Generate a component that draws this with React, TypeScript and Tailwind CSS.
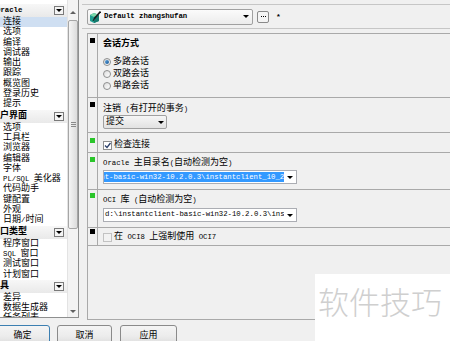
import React from "react";

// split CJK and ASCII so latin prints as half-width mono like SimSun
function T({ s }: { s: string }) {
  const parts = s.split(/([\x00-\x7f]+)/).filter(Boolean);
  return (
    <>
      {parts.map((p, i) =>
        /^[\x00-\x7f]+$/.test(p) ? (
          <span key={i} className="text-[7.3px]">
            {p}
          </span>
        ) : (
          <span key={i}>{p}</span>
        )
      )}
    </>
  );
}

const tree = [
  {
    title: "Oracle",
    shift: "ml-[-4px]",
    items: ["连接", "选项", "编译", "调试器", "输出", "跟踪", "概览图", "登录历史", "提示"],
  },
  {
    title: "用户界面",
    shift: "ml-[-9px]",
    items: ["选项", "工具栏", "浏览器", "编辑器", "字体", "PL/SQL 美化器", "代码助手", "键配置", "外观", "日期/时间"],
  },
  {
    title: "窗口类型",
    shift: "ml-[-9px]",
    items: ["程序窗口", "SQL 窗口", "测试窗口", "计划窗口"],
  },
  {
    title: "工具",
    shift: "ml-[-9px]",
    items: ["差异", "数据生成器", "任务列表"],
  },
];

function DownTri() {
  return <div className="w-0 h-0 border-x-[3px] border-x-transparent border-t-[3px] border-t-black" />;
}

function LeftPanel() {
  return (
    <div className="flex w-[79px] h-[318px] shrink-0 border-r border-b border-[#8e8f8f] bg-white">
      <div className="w-[67px] overflow-hidden pt-[4px]">
        {tree.map((g) => (
          <div key={g.title}>
            <div className="flex h-[13px] items-center justify-between pr-[3px] bg-gradient-to-b from-[#f7f7f7] to-[#e9e9e9]">
              <span className={`font-bold whitespace-nowrap ${g.shift}`}>
                <T s={g.title} />
              </span>
              <div className="flex w-[10px] h-[9px] items-center justify-center border border-[#7a7a7a] bg-[#f4f4f4]">
                <DownTri />
              </div>
            </div>
            {g.items.map((it, i) => (
              <div
                key={it}
                className={`h-[10.3px] leading-[10.3px] pl-[3px] whitespace-nowrap ${
                  g.title === "Oracle" && i === 0 ? "bg-[#cfdff2]" : ""
                }`}
              >
                <T s={it} />
              </div>
            ))}
          </div>
        ))}
      </div>
      <div className="flex w-[11px] flex-col border-l border-[#e3e3e3] bg-[#f3f3f3]">
        <div className="flex h-[20px] justify-center pt-[11px]">
          <div className="w-0 h-0 border-x-[3px] border-x-transparent border-b-[3px] border-b-[#606060]" />
        </div>
        <div className="flex h-[209px] flex-col items-center justify-center rounded-[2px] border border-[#a6a6a6] bg-gradient-to-r from-[#f5f5f5] to-[#dcdcdc]">
          <div className="w-[5px] border-t border-[#8a8a8a]" />
          <div className="mt-[1px] w-[5px] border-t border-[#8a8a8a]" />
          <div className="mt-[1px] w-[5px] border-t border-[#8a8a8a]" />
        </div>
        <div className="mt-auto flex justify-center pb-[4px]">
          <div className="w-0 h-0 border-x-[3px] border-x-transparent border-t-[3px] border-t-[#606060]" />
        </div>
      </div>
    </div>
  );
}

function SessionIcon() {
  return (
    <svg width="12" height="12" viewBox="0 0 12 12">
      <path d="M1 4 L5 2 L10 4 L10 10 L5 12 L1 10 Z" fill="#1f9d8f" />
      <path d="M1 4 L5 2 L10 4 L5 6 Z" fill="#7ad6a8" />
      <path d="M5 6 L10 4 L10 10 L5 12 Z" fill="#157a6e" />
      <path d="M11.5 0.5 L5 8" stroke="#1b1b1b" strokeWidth="1.6" />
      <path d="M5 8 L4 10" stroke="#1b1b1b" strokeWidth="1" />
    </svg>
  );
}

function Marker({ green, top }: { green?: boolean; top: string }) {
  return (
    <div className={`w-[10px] shrink-0 border-r border-[#a9a9a9] pl-[2px] ${top}`}>
      <div className={`w-[5px] h-[5px] ${green ? "bg-[#2ac52a]" : "bg-black"}`} />
    </div>
  );
}

function Radio({ on }: { on?: boolean }) {
  return (
    <div className="flex w-[8px] h-[8px] items-center justify-center rounded-full border border-[#8e8f8f] bg-gradient-to-br from-[#dcdcdc] to-white">
      {on && <div className="w-[4px] h-[4px] rounded-full bg-gradient-to-br from-[#5aa3e0] to-[#1c5a96]" />}
    </div>
  );
}

function Combo({ w, children }: { w: string; children: React.ReactNode }) {
  return (
    <div className={`flex h-[14px] ${w} border border-[#abadb3] bg-white`}>
      <div className="flex flex-1 items-center overflow-hidden whitespace-nowrap">{children}</div>
      <div className="flex w-[12px] items-center justify-center">
        <DownTri />
      </div>
    </div>
  );
}

const path = "d:\\instantclient-basic-win32-10.2.0.3\\instantclient_10_2";

function MainPanel() {
  return (
    <div className="ml-[5px] mt-[4px] flex flex-1 flex-col border-t border-l border-b border-[#a9a9a9]">
      <div className="flex h-[64px] border-b border-[#a9a9a9]">
        <Marker top="pt-[4px]" />
        <div className="pl-[5px] pt-[5px]">
          <div className="h-[10px] leading-[10px] font-semibold">会话方式</div>
          <div className="mt-[7px] flex h-[12px] items-center gap-[2px]">
            <Radio on />
            <span>多路会话</span>
          </div>
          <div className="flex h-[12px] items-center gap-[2px]">
            <Radio />
            <span>双路会话</span>
          </div>
          <div className="flex h-[12px] items-center gap-[2px]">
            <Radio />
            <span>单路会话</span>
          </div>
        </div>
      </div>

      <div className="flex h-[35px] border-b border-[#a9a9a9]">
        <Marker top="pt-[4px]" />
        <div className="pl-[5px] pt-[6px]">
          <div className="h-[10px] leading-[10px] whitespace-nowrap">
            <T s="注销 (有打开的事务)" />
          </div>
          <div className="mt-[1px] flex h-[14px] w-[64px] rounded-[2px] border border-[#a0a0a0] bg-gradient-to-b from-[#f6f6f6] to-[#e2e2e2]">
            <div className="flex flex-1 items-center pl-[2px]">提交</div>
            <div className="flex w-[10px] items-center justify-center">
              <DownTri />
            </div>
          </div>
        </div>
      </div>

      <div className="flex h-[20px] border-b border-[#a9a9a9]">
        <Marker green top="pt-[5px]" />
        <div className="pl-[5px] pt-[7px]">
          <div className="flex h-[10px] items-center gap-[2px]">
            <div className="flex w-[9px] h-[9px] items-center justify-center border border-[#8e8f8f] bg-white">
              <svg width="7" height="7" viewBox="0 0 7 7">
                <path d="M1 3.5 L3 5.5 L6.5 1" stroke="#2a3f6a" strokeWidth="1.3" fill="none" />
              </svg>
            </div>
            <span>检查连接</span>
          </div>
        </div>
      </div>

      <div className="flex h-[37px] border-b border-[#a9a9a9]">
        <Marker green top="pt-[4px]" />
        <div className="pl-[5px] pt-[5px]">
          <div className="h-[10px] leading-[10px] whitespace-nowrap">
            <T s="Oracle 主目录名(自动检测为空)" />
          </div>
          <div className="mt-[2px]">
            <Combo w="w-[194px]">
              <span className="ml-[-65px] bg-[#3399ff] text-[7.3px] leading-[10px] text-white">{path}</span>
            </Combo>
          </div>
        </div>
      </div>

      <div className="flex h-[38px] border-b border-[#a9a9a9]">
        <Marker green top="pt-[3px]" />
        <div className="pl-[5px] pt-[5px]">
          <div className="h-[10px] leading-[10px] whitespace-nowrap">
            <T s="OCI 库 (自动检测为空)" />
          </div>
          <div className="mt-[3px]">
            <Combo w="w-[194px]">
              <span className="pl-[1px] text-[7.3px]">{path}</span>
            </Combo>
          </div>
        </div>
      </div>

      <div className="flex h-[18px] border-b border-[#a9a9a9]">
        <Marker top="pt-[1px]" />
        <div className="pl-[5px] pt-[4px]">
          <div className="flex h-[10px] items-center gap-[2px]">
            <div className="w-[9px] h-[9px] border border-[#c2c2c2] bg-[#f2f2f2]" />
            <span className="whitespace-nowrap">
              <T s="在 OCI8 上强制使用 OCI7" />
            </span>
          </div>
        </div>
      </div>
    </div>
  );
}

function Btn({ label, def, cls }: { label: string; def?: boolean; cls: string }) {
  return (
    <div
      className={`flex h-[22px] items-center justify-center rounded-[3px] border bg-gradient-to-b from-[#f4f4f4] via-[#ececec] to-[#d9d9d9] ${
        def ? "border-[#3c7fb1]" : "border-[#8a8a8a]"
      } ${cls}`}
    >
      {label}
    </div>
  );
}

export default function App() {
  return (
    <div className="relative w-[450px] h-[341px] overflow-hidden bg-[#f0f0f0] text-[9px] leading-none text-black font-['Liberation_Mono','Noto_Sans_CJK_SC',monospace]">
      <div className="flex h-[320px]">
        <LeftPanel />
        <div className="flex flex-1 flex-col pl-[3px] pt-[4px]">
          <div className="flex h-[25px] items-center border-t border-b border-[#c6c6c6] pl-[5px]">
            <div className="flex h-[16px] w-[166px] items-center rounded-[2px] border border-[#a0a0a0] bg-gradient-to-b from-[#fbfbfb] to-[#ececec]">
              <div className="pl-[1px] pr-[3px]">
                <SessionIcon />
              </div>
              <span className="flex-1 text-[7.3px] font-bold">Default zhangshufan</span>
              <div className="flex w-[12px] justify-center">
                <DownTri />
              </div>
            </div>
            <div className="ml-[4px] flex h-[12px] w-[12px] items-center justify-center gap-[1px] rounded-[2px] border border-[#8a8a8a] bg-[#f4f4f4]">
              <div className="w-[1px] h-[1px] bg-black" />
              <div className="w-[1px] h-[1px] bg-black" />
              <div className="w-[1px] h-[1px] bg-black" />
            </div>
            <span className="ml-[7px] text-[8px] font-bold">*</span>
          </div>
          <MainPanel />
        </div>
      </div>
      <div className="mt-[5px] flex">
        <Btn label="确定" def cls="ml-[-5px] w-[55px]" />
        <Btn label="取消" cls="ml-[7px] w-[55px]" />
        <Btn label="应用" cls="ml-[8px] w-[57px]" />
      </div>
      <div className="absolute left-[315px] top-[274px] w-[135px] h-[67px] bg-white pl-[3px] pt-[11px]">
        <span className="text-[31px] leading-none text-[#cfcfcf] font-['Noto_Sans_CJK_SC',sans-serif] font-light">软件技巧</span>
      </div>
    </div>
  );
}
